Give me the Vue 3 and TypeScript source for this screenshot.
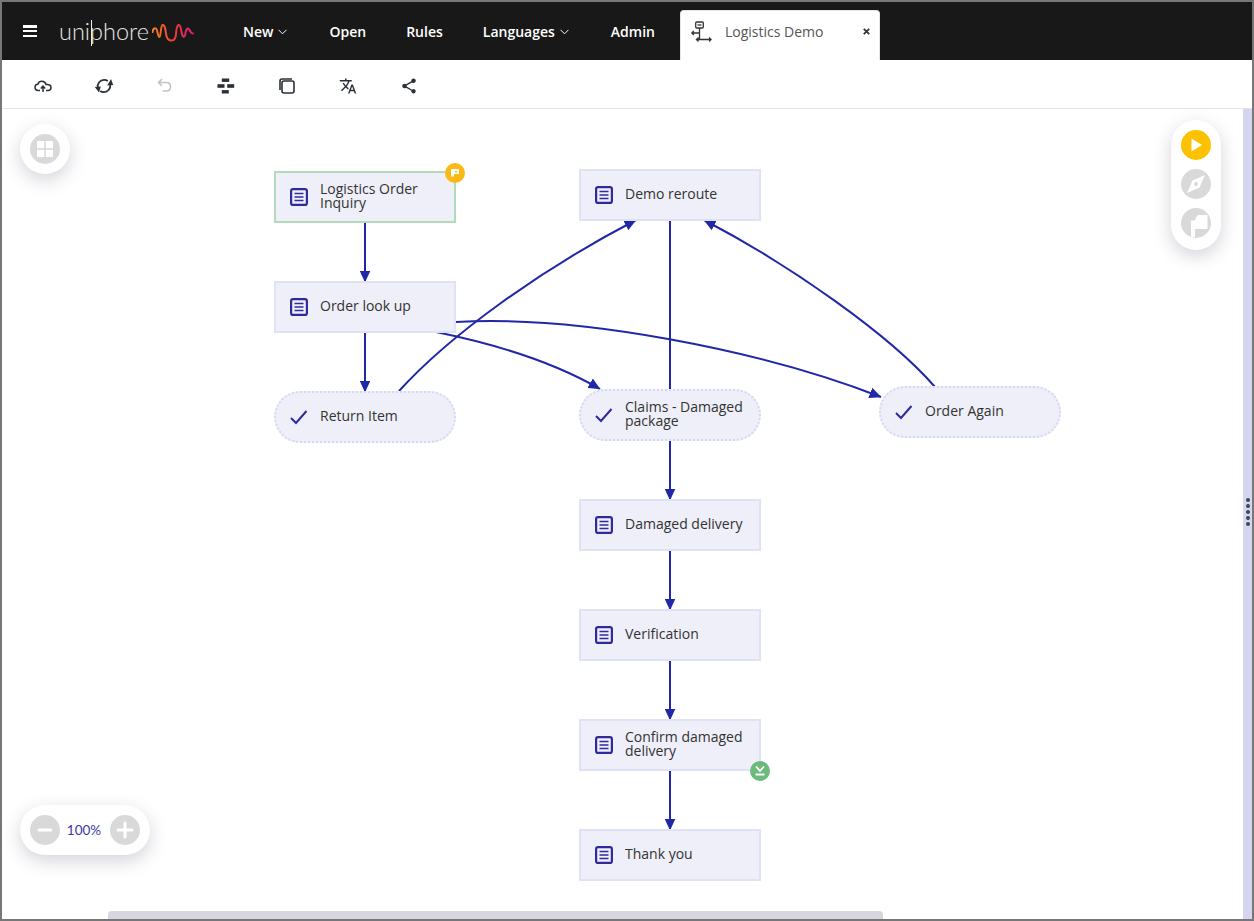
<script setup lang="ts">
interface FlowNode {
  id: string
  label: string
  x: number
  y: number
  kind: 'step' | 'intent'
  start?: boolean
  end?: boolean
}

// node positions are page pixels, the canvas starts at 2,109
const originX = 2
const originY = 109

const nodes: FlowNode[] = [
  { id: 'inquiry', label: 'Logistics Order\nInquiry', x: 274, y: 171, kind: 'step', start: true },
  { id: 'lookup', label: 'Order look up', x: 274, y: 281, kind: 'step' },
  { id: 'return', label: 'Return Item', x: 274, y: 391, kind: 'intent' },
  { id: 'reroute', label: 'Demo reroute', x: 579, y: 169, kind: 'step' },
  { id: 'claims', label: 'Claims - Damaged\npackage', x: 579, y: 389, kind: 'intent' },
  { id: 'again', label: 'Order Again', x: 879, y: 386, kind: 'intent' },
  { id: 'damaged', label: 'Damaged delivery', x: 579, y: 499, kind: 'step' },
  { id: 'verify', label: 'Verification', x: 579, y: 609, kind: 'step' },
  { id: 'confirm', label: 'Confirm damaged\ndelivery', x: 579, y: 719, kind: 'step', end: true },
  { id: 'thanks', label: 'Thank you', x: 579, y: 829, kind: 'step' }
]

const edges = [
  { d: 'M365 222 L365 282', arrow: true },
  { d: 'M365 332 L365 392', arrow: true },
  { d: 'M399 391 C450 335 540 270 636 220', arrow: true },
  { d: 'M670 221 L670 389', arrow: false },
  { d: 'M436 332 C490 343 550 360 600 389', arrow: true },
  { d: 'M456 322 C580 315 760 350 881 397', arrow: true },
  { d: 'M935 387 C890 335 790 265 704 220', arrow: true },
  { d: 'M670 441 L670 500', arrow: true },
  { d: 'M670 551 L670 610', arrow: true },
  { d: 'M670 661 L670 720', arrow: true },
  { d: 'M670 771 L670 830', arrow: true }
]

const nodeStyle = (n: FlowNode) => ({
  left: `${n.x - originX}px`,
  top: `${n.y - originY}px`
})

const menu = [
  { label: 'New', caret: true },
  { label: 'Open', caret: false },
  { label: 'Rules', caret: false },
  { label: 'Languages', caret: true },
  { label: 'Admin', caret: false }
]

const toolIcons = ['cloud', 'sync', 'undo', 'flow', 'copy', 'translate', 'share']
</script>

<template>
  <div class="frame">
    <header class="topbar">
      <button class="burger" aria-label="Menu"><i /><i /><i /></button>
      <div class="logo">
        <span class="logo-text">uniphore</span>
        <svg class="logo-wave" width="42" height="19" viewBox="0 0 42 19" fill="none">
          <defs>
            <linearGradient id="wave" x1="0" x2="1" y1="0" y2="0">
              <stop offset="0" stop-color="#f58220" />
              <stop offset="0.5" stop-color="#e8402f" />
              <stop offset="1" stop-color="#e0187c" />
            </linearGradient>
          </defs>
          <path
            d="M0.500 8 C1 5 2.500 3.500 4 4.500 C6 6 5.500 13 7.500 13 C9 13 8.500 1.500 10.500 1 C13.500 0.500 13.500 8 14.500 12 C15.500 17 22 18.500 23.500 13 C24.500 9 24 2 26.500 1 C29 0.500 29 7 30 10 C31 14 33 13.500 33.500 9 C34 5 36 3 37.500 6 C38.500 8 39.500 9.500 41 9.500"
            stroke="url(#wave)"
            stroke-width="2"
            stroke-linecap="round"
          />
        </svg>
      </div>
      <nav class="menu">
        <a v-for="m in menu" :key="m.label" class="menu-item">
          {{ m.label }}
          <svg v-if="m.caret" class="caret" width="9" height="6" viewBox="0 0 9 6" fill="none">
            <path d="M0.500 0.800 L4.500 4.800 L8.500 0.800" stroke="#fff" stroke-width="1" />
          </svg>
        </a>
      </nav>
      <div class="tab">
        <svg class="tab-icon" width="21" height="21" viewBox="0 0 21 21" fill="none" stroke="#333" stroke-width="1.300">
          <rect x="4.700" y="1" width="7.600" height="6" rx="1" />
          <path d="M6.500 4 H10.500" />
          <path d="M8.500 7 V18.500 M1 12 H8.500 M2.800 10 L0.800 12 L2.800 14 M5.500 18.500 H20 M7.500 16.500 L5.500 18.500 L7.500 20.500 M18 16.500 L20 18.500 L18 20.500" />
        </svg>
        <span class="tab-title">Logistics Demo</span>
        <svg class="tab-close" width="7" height="7" viewBox="0 0 7 7" stroke="#333" stroke-width="1.800">
          <path d="M0.800 0.800 L6.200 6.200 M6.200 0.800 L0.800 6.200" />
        </svg>
      </div>
    </header>

    <div class="toolbar">
      <span v-for="icon in toolIcons" :key="icon" class="tool">
        <svg v-if="icon === 'cloud'" width="20" height="20" viewBox="0 0 20 20" fill="none" stroke="#2b2f36" stroke-width="1.500">
          <path d="M7 14.500 H5.500 C3.300 14.500 2 13 2 11.300 C2 9.500 3.300 8.200 4.800 8.200 C5.500 6.300 7 5.300 8.800 5.300 C11 5.300 12.500 6.600 13 8.500 C15.800 8 18 9.300 18 11.500 C18 13.300 16.600 14.500 15 14.500 H13" />
          <path d="M10 16 V10.500 M7.800 12.500 L10 10.200 L12.200 12.500" />
        </svg>
        <svg v-else-if="icon === 'sync'" width="20" height="20" viewBox="0 0 20 20" fill="none" stroke="#2b2f36" stroke-width="1.800">
          <path d="M3.700 11.500 C3.200 7.500 6 4 10 3.800 C11.500 3.700 12.700 4.200 13.800 5" />
          <path d="M16.300 8.500 C16.800 12.500 14 16 10 16.200 C8.500 16.300 7.300 15.800 6.200 15" />
          <path d="M0.800 11 L6.800 10.500 L5 16.500 Z M13.200 9.500 L19.200 9 L17 3 Z" fill="#2b2f36" stroke="none" />
        </svg>
        <svg v-else-if="icon === 'undo'" width="20" height="20" viewBox="0 0 20 20" fill="none" stroke="#c4c4c4" stroke-width="1.600">
          <path d="M7 3 L3.500 6.500 L7 10 M3.500 6.500 H11.500 C14 6.500 15.500 8.500 15.500 10.800 C15.500 13.200 14 15 11.500 15 H7.500" />
        </svg>
        <svg v-else-if="icon === 'flow'" width="20" height="20" viewBox="0 0 20 20" fill="#2b2f36">
          <rect x="5.800" y="2.500" width="7.400" height="3.400" />
          <rect x="1.500" y="8.200" width="7" height="3.600" />
          <rect x="11.200" y="8.200" width="7" height="3.600" />
          <rect x="5.800" y="14.100" width="7" height="3.400" />
        </svg>
        <svg v-else-if="icon === 'copy'" width="20" height="20" viewBox="0 0 20 20" fill="none" stroke="#2b2f36" stroke-width="1.600">
          <path d="M3 14 V5 C3 3.800 3.800 3 5 3 H15" />
          <rect x="5" y="5" width="12" height="12" rx="2" />
        </svg>
        <svg v-else-if="icon === 'translate'" width="18" height="18" viewBox="0 0 24 24" fill="#2b2f36">
          <path d="M12.870 15.070l-2.540-2.510.03-.03c1.740-1.940 2.980-4.170 3.710-6.530H17V4h-7V2H8v2H1v1.990h11.170C11.500 7.920 10.440 9.750 9 11.350 8.070 10.320 7.300 9.190 6.690 8h-2c.73 1.630 1.730 3.170 2.980 4.560l-5.090 5.020L4 19l5-5 3.110 3.110.76-2.040zM18.500 10h-2L12 22h2l1.120-3h4.750L21 22h2l-4.500-12zm-2.620 7l1.620-4.330L19.120 17h-3.240z" />
        </svg>
        <svg v-else width="18" height="18" viewBox="0 0 24 24" fill="#2b2f36">
          <path d="M18 16.080c-.76 0-1.440.3-1.960.77L8.910 12.700c.05-.23.09-.46.09-.7s-.04-.47-.09-.7l7.050-4.110c.54.5 1.250.81 2.040.81 1.660 0 3-1.340 3-3s-1.340-3-3-3-3 1.340-3 3c0 .24.04.47.09.7L8.040 9.810C7.500 9.310 6.790 9 6 9c-1.660 0-3 1.340-3 3s1.340 3 3 3c.79 0 1.500-.31 2.040-.81l7.120 4.160c-.05.21-.08.43-.08.65 0 1.610 1.310 2.920 2.920 2.920s2.920-1.310 2.920-2.920-1.310-2.920-2.920-2.920z" />
        </svg>
      </span>
    </div>

    <div class="workspace">
      <main class="canvas">
        <svg class="edges" width="1241" height="810" :viewBox="`${originX} ${originY} 1241 810`" fill="none">
          <defs>
            <marker id="head" markerWidth="12" markerHeight="11" refX="11.500" refY="5.500" orient="auto" markerUnits="userSpaceOnUse">
              <path d="M0 0 L12 5.500 L0 11 Z" fill="#2128a8" />
            </marker>
          </defs>
          <path
            v-for="(e, i) in edges"
            :key="i"
            :d="e.d"
            stroke="#2128a8"
            stroke-width="2"
            :marker-end="e.arrow ? 'url(#head)' : undefined"
          />
        </svg>

        <div
          v-for="n in nodes"
          :key="n.id"
          class="node"
          :class="[n.kind, { start: n.start }]"
          :style="nodeStyle(n)"
        >
          <svg v-if="n.kind === 'step'" class="node-icon" width="18" height="18" viewBox="0 0 18 18" fill="none" stroke="#2f2a9e" stroke-width="2.200">
            <rect x="1.100" y="1.100" width="15.800" height="15.800" rx="2" />
            <path d="M4.500 5.500 H13.500 M4.500 9 H13.500 M4.500 12.500 H13.500" stroke-width="1.700" />
          </svg>
          <svg v-else class="node-icon" width="18" height="18" viewBox="0 0 18 18" fill="none" stroke="#2f2a9e" stroke-width="2">
            <path d="M1 10 L6 15 L16.500 3" />
          </svg>
          <div class="node-label">{{ n.label }}</div>
          <span v-if="n.start" class="badge badge-start">
            <svg width="10" height="10" viewBox="0 0 10 10" fill="#fff">
              <path d="M1 1 H9 V6 H4 V8.500 H1 Z M5 3 V4.500 H7 V3 Z" fill-rule="evenodd" />
            </svg>
          </span>
          <span v-if="n.end" class="badge badge-end">
            <svg width="12" height="12" viewBox="0 0 12 12" fill="none" stroke="#fff" stroke-width="1.800">
              <path d="M2 1.500 L6 6 L10 1.500 M1.500 9.500 H10.500" />
            </svg>
          </span>
        </div>

        <div class="float float-left">
          <span class="round">
            <svg width="18" height="18" viewBox="0 0 18 18" fill="#fff">
              <rect x="1" y="1" width="7.200" height="7.200" />
              <rect x="9.800" y="1" width="7.200" height="7.200" />
              <rect x="1" y="9.800" width="7.200" height="7.200" />
              <rect x="9.800" y="9.800" width="7.200" height="7.200" />
            </svg>
          </span>
        </div>

        <div class="float float-right">
          <span class="round round-play">
            <svg width="14" height="14" viewBox="0 0 14 14" fill="#fff"><path d="M2.500 0.500 L13 7 L2.500 13.500 Z" /></svg>
          </span>
          <span class="round">
            <svg width="22" height="22" viewBox="0 0 22 22" fill="#fff">
              <path d="M20 2 L14.500 14.500 L2 20 L7.500 7.500 Z M11 9 A2 2 0 1 0 11 13 A2 2 0 1 0 11 9 Z" fill-rule="evenodd" />
            </svg>
          </span>
          <span class="round">
            <svg width="30" height="30" viewBox="0 0 30 30" fill="#fff">
              <path d="M10 12.500 H13 C15 12.500 15 7 18 7 H26.500 V21 H14 V29.300 H10 Z" />
            </svg>
          </span>
        </div>

        <div class="float float-zoom">
          <span class="round">
            <svg width="20" height="20" viewBox="0 0 20 20" stroke="#fff" stroke-width="3" stroke-linecap="round"><path d="M4 10 H16" /></svg>
          </span>
          <span class="zoom-value">100%</span>
          <span class="round">
            <svg width="20" height="20" viewBox="0 0 20 20" stroke="#fff" stroke-width="3" stroke-linecap="round"><path d="M3 10 H17 M10 3 V17" /></svg>
          </span>
        </div>

        <div class="hscroll"><div class="hscroll-thumb" /></div>
      </main>
      <aside class="side-strip">
        <span class="grip"><i /><i /><i /><i /><i /></span>
      </aside>
    </div>
  </div>
</template>

<style>
html,
body {
  margin: 0;
  background: #fff;
}
</style>

<style scoped>
.frame {
  box-sizing: border-box;
  width: 1254px;
  height: 921px;
  border: 2px solid #777;
  display: flex;
  flex-direction: column;
  overflow: hidden;
  font-family: "Open Sans", "Liberation Sans", sans-serif;
  font-size: 14px;
  color: #333;
}

.topbar {
  height: 58px;
  flex: none;
  background: #181818;
  display: flex;
  align-items: center;
  padding-left: 21px;
}

.burger {
  width: 14px;
  height: 12px;
  padding: 0;
  border: 0;
  background: none;
  display: flex;
  flex-direction: column;
  justify-content: space-between;
  margin-right: 22px;
}

.burger i {
  display: block;
  height: 2.500px;
  background: #fff;
}

.logo {
  width: 135px;
  display: flex;
  align-items: center;
  gap: 3px;
  flex: none;
}

.logo-text {
  position: relative;
  font-family: Lato, "Open Sans", sans-serif;
  font-weight: 300;
  font-size: 23.500px;
  line-height: 30px;
  color: #e6e6e6;
  width: 90px;
  white-space: nowrap;
}

/* the long stem of the p in the wordmark */
.logo-text::after {
  content: "";
  position: absolute;
  left: 32px;
  top: 4px;
  width: 1px;
  height: 26px;
  background: #f0f0f0;
}

.logo-wave {
  flex: none;
  margin-top: 5px;
}

.menu {
  display: flex;
  gap: 40px;
  margin-left: 49px;
  flex: none;
}

.menu-item {
  color: #fff;
  font-weight: 600;
  font-size: 14px;
  display: flex;
  align-items: center;
  gap: 5px;
}

.caret {
  margin-top: 1px;
  margin-right: 2px;
}

.tab {
  margin-left: 25px;
  align-self: flex-end;
  box-sizing: border-box;
  width: 200px;
  height: 50px;
  background: #fff;
  border: 1px solid #e6e6e6;
  border-bottom: 0;
  border-radius: 4px 4px 0 0;
  display: flex;
  align-items: center;
  padding: 0 9px 8px 10px;
}

.tab-icon {
  flex: none;
}

.tab-title {
  margin-left: 13px;
  color: #555;
  flex: 1;
}

.tab-close {
  flex: none;
}

.toolbar {
  height: 45px;
  flex: none;
  border-bottom: 1px solid #e3e5e8;
  display: flex;
  align-items: center;
  gap: 41px;
  padding-left: 31px;
  padding-top: 3px;
}

.tool {
  width: 20px;
  height: 20px;
  display: flex;
  align-items: center;
  justify-content: center;
}

.tool svg {
  display: block;
}

.workspace {
  flex: 1;
  min-height: 0;
  display: flex;
}

.canvas {
  flex: 1;
  position: relative;
  overflow: hidden;
}

.edges {
  position: absolute;
  left: 0;
  top: 0;
}

.node {
  position: absolute;
  box-sizing: border-box;
  width: 182px;
  height: 52px;
  background: #eeeff8;
  border: 2px solid #dfe2f4;
  display: flex;
  align-items: center;
  padding-left: 14px;
  gap: 12px;
}

.node.start {
  border-color: #b2dcb9;
}

.node.intent {
  border: 2px dotted #d5d8f3;
  border-radius: 26px;
}

.node-icon {
  flex: none;
}

.node-label {
  line-height: 14px;
  color: #333;
  font-size: 14px;
  white-space: pre-line;
  padding-bottom: 2px;
}

.badge {
  position: absolute;
  width: 20px;
  height: 20px;
  border-radius: 50%;
  display: flex;
  align-items: center;
  justify-content: center;
}

.badge-start {
  right: -11px;
  top: -10px;
  background: #fdb913;
}

.badge-end {
  right: -11px;
  bottom: -12px;
  background: #6dbb7b;
}

.float {
  position: absolute;
  background: #fff;
  box-shadow: 0 6px 18px rgba(60, 60, 90, 0.22);
  display: flex;
  align-items: center;
  border-radius: 25px;
}

.float-left {
  left: 18px;
  top: 15px;
  width: 50px;
  height: 50px;
  justify-content: center;
}

.float-right {
  left: 1169px;
  top: 11px;
  width: 50px;
  height: 130px;
  box-sizing: border-box;
  padding-bottom: 2px;
  flex-direction: column;
  justify-content: center;
  gap: 9px;
}

.float-zoom {
  left: 18px;
  top: 696px;
  width: 130px;
  height: 50px;
  box-sizing: border-box;
  padding-bottom: 1px;
  justify-content: center;
  gap: 7px;
}

.round {
  width: 30px;
  height: 30px;
  border-radius: 50%;
  background: #d9d9d9;
  display: flex;
  align-items: center;
  justify-content: center;
  flex: none;
}

.round-play {
  background: #fcc200;
}

.zoom-value {
  font-family: Lato, sans-serif;
  font-size: 13.500px;
  color: #3a37a8;
  width: 36px;
  text-align: center;
  margin-left: -1px;
  margin-right: 1px;
}

.hscroll {
  position: absolute;
  left: 0;
  right: 0;
  bottom: 0;
  height: 8px;
}

.hscroll-thumb {
  margin-left: 106px;
  width: 775px;
  height: 8px;
  background: #d6d6e0;
  border-radius: 4px 4px 0 0;
}

.side-strip {
  width: 9px;
  flex: none;
  background: #d4d5ee;
  position: relative;
}

.grip {
  position: absolute;
  left: 3px;
  top: 389px;
  display: flex;
  flex-direction: column;
  gap: 2px;
}

.grip i {
  display: block;
  width: 4px;
  height: 4px;
  border-radius: 50%;
  background: #3c4650;
}
</style>
